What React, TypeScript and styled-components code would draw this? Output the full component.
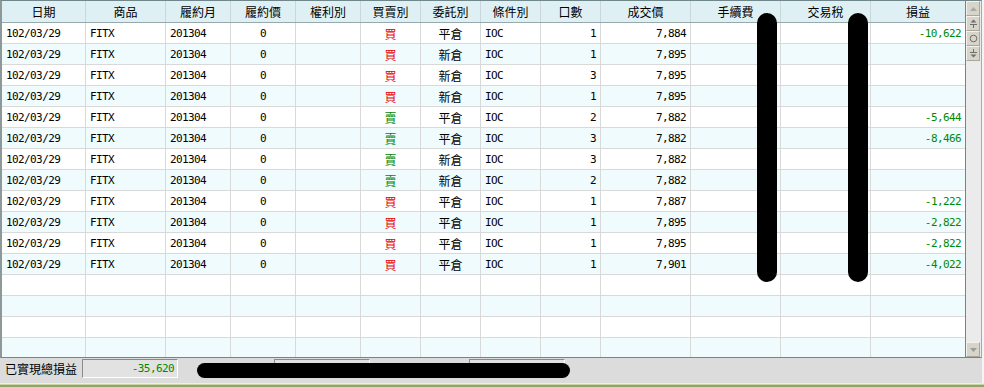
import React from 'react';
import styled, { createGlobalStyle, css } from 'styled-components';

const Global = createGlobalStyle`
  *, *::before, *::after { box-sizing: border-box; }
  html, body { margin: 0; padding: 0; background: #f4f4f4; }
  body { width: 984px; height: 387px; overflow: hidden; }
`;

const COLS = [84, 80, 65, 65, 65, 60, 60, 60, 60, 90, 90, 90, 94];
const TEMPLATE = COLS.map((c) => `${c}px`).join(' ');

type Align = 'left' | 'center' | 'right';
type Tone = 'buy' | 'sell' | 'loss' | 'none';

const CJK = `"Noto Sans CJK TC", "Noto Sans CJK SC", sans-serif`;
const MONO = `"DejaVu Sans Mono", "Liberation Mono", "Noto Sans CJK TC", monospace`;

const Window = styled.div`
  position: relative;
  width: 984px;
  height: 387px;
  display: flex;
  flex-direction: column;
  background: #f4f4f4;
`;

const Frame = styled.div`
  position: relative;
  width: 982px;
  height: 358px;
  display: flex;
  border-top: 1px solid #6f878b;
  border-bottom: 1px solid #6f878b;
  border-left: 2px solid #8d9999;
  border-right: 1px solid #a9a9a9;
`;

const Table = styled.div`
  width: 963px;
  height: 100%;
  display: flex;
  flex-direction: column;
  overflow: hidden;
  background: #ffffff;
`;

const HeaderRow = styled.div`
  display: grid;
  grid-template-columns: ${TEMPLATE};
  height: 22px;
  flex: none;
  background: #dff0f4;
  border-bottom: 1px solid #97a9ad;
`;

const HeaderCell = styled.div`
  display: flex;
  align-items: center;
  justify-content: center;
  font-family: ${CJK};
  font-size: 12px;
  color: #000;
  border-right: 1px solid #c9d7da;
  &:last-child { border-right: none; }
`;

const Body = styled.div`
  flex: 1;
  overflow: hidden;
`;

const Row = styled.div<{ $alt: boolean }>`
  display: grid;
  grid-template-columns: ${TEMPLATE};
  height: 21px;
  background: ${(p) => (p.$alt ? '#effbfd' : '#ffffff')};
  border-bottom: 1px solid #d9d9d9;
`;

const toneColor: Record<Tone, string> = {
  buy: '#e80000',
  sell: '#008a00',
  loss: '#008a00',
  none: '#000000',
};

const Cell = styled.div<{ $align: Align; $tone: Tone; $latin: boolean }>`
  display: flex;
  align-items: center;
  justify-content: ${(p) =>
    p.$align === 'left' ? 'flex-start' : p.$align === 'right' ? 'flex-end' : 'center'};
  padding: 0 ${(p) => (p.$align === 'right' ? '4px' : '0')} 0
    ${(p) => (p.$align === 'left' ? '4px' : '0')};
  color: ${(p) => toneColor[p.$tone]};
  border-right: 1px solid #d9d9d9;
  white-space: nowrap;
  overflow: hidden;
  ${(p) =>
    p.$latin
      ? css`
          font-family: ${MONO};
          font-size: 11px;
          letter-spacing: -0.6px;
        `
      : css`
          font-family: ${CJK};
          font-size: 12px;
        `}
  &:last-child { border-right: none; }
`;

const ScrollBar = styled.div`
  width: 16px;
  height: 100%;
  display: flex;
  flex-direction: column;
  justify-content: space-between;
  background: #ebebeb;
  border-left: 1px solid #6f878b;
`;

const ButtonStack = styled.div`
  display: flex;
  flex-direction: column;
`;

const ScrollButton = styled.div`
  width: 14px;
  height: 15px;
  display: flex;
  align-items: center;
  justify-content: center;
  background: #d7d4ca;
  border-top: 1px solid #f3f2ee;
  border-left: 1px solid #f3f2ee;
  border-right: 1px solid #a9a69d;
  border-bottom: 1px solid #a9a69d;
`;

const Redaction = styled.div<{ $left: number; $top: number; $w: number; $h: number }>`
  position: absolute;
  left: ${(p) => p.$left}px;
  top: ${(p) => p.$top}px;
  width: ${(p) => p.$w}px;
  height: ${(p) => p.$h}px;
  border-radius: ${(p) => Math.min(p.$w, p.$h) / 2}px;
  background: #000;
`;

const StatusBar = styled.div`
  position: relative;
  width: 982px;
  height: 25px;
  display: flex;
  align-items: flex-start;
  padding: 1px 0 0 5px;
  background: #dcdcdc;
`;

const StatusLabel = styled.div<{ $w: number }>`
  width: ${(p) => p.$w}px;
  height: 19px;
  flex: none;
  display: flex;
  align-items: center;
  font-family: ${CJK};
  font-size: 12px;
  color: #000;
  white-space: nowrap;
`;

const StatusBox = styled.div`
  width: 96px;
  height: 19px;
  flex: none;
  display: flex;
  align-items: center;
  justify-content: flex-end;
  padding-right: 3px;
  background: #e2e2e2;
  border-top: 1px solid #8a8a8a;
  border-left: 1px solid #8a8a8a;
  border-bottom: 1px solid #ffffff;
  border-right: 1px solid #ffffff;
  font-family: ${MONO};
  font-size: 11px;
  letter-spacing: -0.6px;
  color: #008a00;
`;

const BottomEdge = styled.div`
  width: 984px;
  height: 4px;
  border-top: 1px solid #eef0e4;
  border-bottom: 2px solid #93a46a;
  background: #c8d3a6;
`;

const headers = [
  '日期', '商品', '履約月', '履約價', '權利別', '買賣別', '委託別',
  '條件別', '口數', '成交價', '手續費', '交易稅', '損益',
];

type Trade = {
  side: '買' | '賣';
  kind: '平倉' | '新倉';
  qty: number;
  price: string;
  pnl: string;
};

const trades: Trade[] = [
  { side: '買', kind: '平倉', qty: 1, price: '7,884', pnl: '-10,622' },
  { side: '買', kind: '新倉', qty: 1, price: '7,895', pnl: '' },
  { side: '買', kind: '新倉', qty: 3, price: '7,895', pnl: '' },
  { side: '買', kind: '新倉', qty: 1, price: '7,895', pnl: '' },
  { side: '賣', kind: '平倉', qty: 2, price: '7,882', pnl: '-5,644' },
  { side: '賣', kind: '平倉', qty: 3, price: '7,882', pnl: '-8,466' },
  { side: '賣', kind: '新倉', qty: 3, price: '7,882', pnl: '' },
  { side: '賣', kind: '新倉', qty: 2, price: '7,882', pnl: '' },
  { side: '買', kind: '平倉', qty: 1, price: '7,887', pnl: '-1,222' },
  { side: '買', kind: '平倉', qty: 1, price: '7,895', pnl: '-2,822' },
  { side: '買', kind: '平倉', qty: 1, price: '7,895', pnl: '-2,822' },
  { side: '買', kind: '平倉', qty: 1, price: '7,901', pnl: '-4,022' },
];

const C = (props: {
  align?: Align;
  tone?: Tone;
  latin?: boolean;
  children?: React.ReactNode;
}) => (
  <Cell $align={props.align ?? 'left'} $tone={props.tone ?? 'none'} $latin={props.latin ?? true}>
    {props.children}
  </Cell>
);

const UpIcon = ({ color }: { color: string }) => (
  <svg width="9" height="6" viewBox="0 0 9 6">
    <path d="M4.5 1 L8 5 L1 5 Z" fill={color} />
  </svg>
);

const DownIcon = ({ color }: { color: string }) => (
  <svg width="9" height="6" viewBox="0 0 9 6">
    <path d="M1 1 L8 1 L4.5 5 Z" fill={color} />
  </svg>
);

const TopIcon = () => (
  <svg width="9" height="9" viewBox="0 0 9 9">
    <path d="M4.5 0.5 L7.5 3.5 L1.5 3.5 Z" fill="#6e6e6e" />
    <rect x="1" y="5" width="7" height="1" fill="#6e6e6e" />
    <rect x="4" y="6" width="1" height="3" fill="#6e6e6e" />
  </svg>
);

const BottomIcon = () => (
  <svg width="9" height="9" viewBox="0 0 9 9">
    <rect x="4" y="0" width="1" height="3" fill="#6e6e6e" />
    <rect x="1" y="3" width="7" height="1" fill="#6e6e6e" />
    <path d="M1.5 5.5 L7.5 5.5 L4.5 8.5 Z" fill="#6e6e6e" />
  </svg>
);

const CircleIcon = () => (
  <svg width="9" height="9" viewBox="0 0 9 9">
    <circle cx="4.5" cy="4.5" r="3.3" fill="none" stroke="#6e6e6e" strokeWidth="1" />
  </svg>
);

export default function App() {
  const emptyRows = 4;
  return (
    <>
      <Global />
      <Window>
        <Frame>
          <Table>
            <HeaderRow>
              {headers.map((h) => (
                <HeaderCell key={h}>{h}</HeaderCell>
              ))}
            </HeaderRow>
            <Body>
              {trades.map((t, i) => (
                <Row key={i} $alt={i % 2 === 1}>
                  <C>102/03/29</C>
                  <C>FITX</C>
                  <C>201304</C>
                  <C align="center">0</C>
                  <C />
                  <C align="center" latin={false} tone={t.side === '買' ? 'buy' : 'sell'}>
                    {t.side}
                  </C>
                  <C align="center" latin={false}>{t.kind}</C>
                  <C>IOC</C>
                  <C align="right">{t.qty}</C>
                  <C align="right">{t.price}</C>
                  <C />
                  <C />
                  <C align="right" tone="loss">{t.pnl}</C>
                </Row>
              ))}
              {Array.from({ length: emptyRows }).map((_, i) => (
                <Row key={`e${i}`} $alt={(trades.length + i) % 2 === 1}>
                  {headers.map((h) => (
                    <C key={h} />
                  ))}
                </Row>
              ))}
            </Body>
          </Table>
          <ScrollBar>
            <ButtonStack>
              <ScrollButton><UpIcon color="#a9a9a9" /></ScrollButton>
              <ScrollButton><TopIcon /></ScrollButton>
              <ScrollButton><CircleIcon /></ScrollButton>
              <ScrollButton><BottomIcon /></ScrollButton>
            </ButtonStack>
            <ScrollButton><DownIcon color="#9c9c9c" /></ScrollButton>
          </ScrollBar>
          <Redaction $left={755} $top={12} $w={20} $h={269} />
          <Redaction $left={846} $top={12} $w={20} $h={269} />
        </Frame>
        <StatusBar>
          <StatusLabel $w={77}>已實現總損益</StatusLabel>
          <StatusBox>-35,620</StatusBox>
          <StatusLabel $w={96} />
          <StatusBox />
          <StatusLabel $w={99} />
          <StatusBox />
          <Redaction $left={197} $top={5} $w={373} $h={15} />
        </StatusBar>
        <BottomEdge />
      </Window>
    </>
  );
}
